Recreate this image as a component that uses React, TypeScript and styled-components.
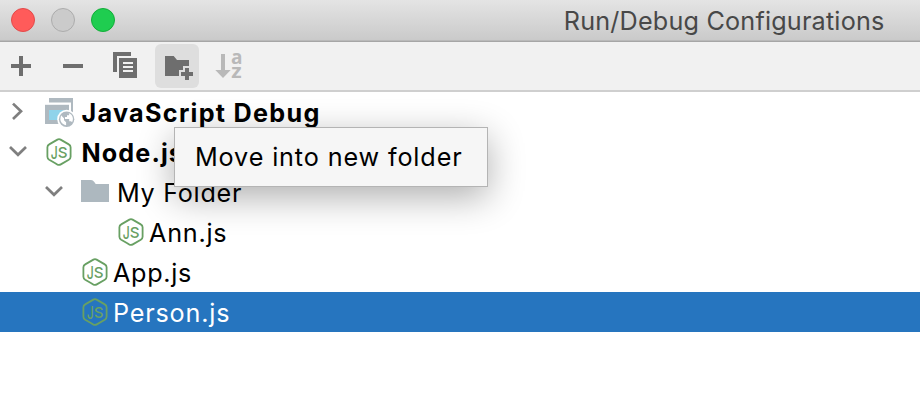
import React from "react";
import styled, { createGlobalStyle } from "styled-components";

const GlobalStyle = createGlobalStyle`
  * { box-sizing: border-box; }
  body { margin: 0; background: #fff; font-family: Inter, "Liberation Sans", sans-serif; overflow: hidden; }
`;

const Window = styled.div`
  position: relative;
  width: 920px;
  height: 400px;
  overflow: hidden;
  background: #fff;
  color: #000;
`;

const TitleBar = styled.header`
  display: flex;
  align-items: center;
  justify-content: space-between;
  height: 42px;
  padding: 0 35.5px 2px 11px;
  background: linear-gradient(#e4e4e4, #cacaca 40px);
  border-bottom: 1px solid #a6a6a6;
  box-shadow: inset 0 -1px #b9b9b9;
`;

const Lights = styled.div`
  display: flex;
  gap: 16px;
`;

const Light = styled.span<{ $fill: string; $ring: string }>`
  width: 24px;
  height: 24px;
  border-radius: 50%;
  background: ${(p) => p.$fill};
  border: 1px solid ${(p) => p.$ring};
`;

const Title = styled.h1`
  margin: 2px 0 0;
  font-size: 25.2px;
  font-weight: 400;
  line-height: 40px;
  letter-spacing: 0.19px;
  color: #484848;
  white-space: nowrap;
`;

const Toolbar = styled.div`
  display: flex;
  align-items: center;
  gap: 8px;
  height: 50px;
  background: #f1f1f1;
  border-bottom: 2px solid #cfcfcf;
`;

const ToolButton = styled.button<{ $active?: boolean }>`
  display: block;
  width: 44px;
  height: 44px;
  padding: 0;
  border: 0;
  border-radius: 6px;
  background: ${(p) => (p.$active ? "#dedede" : "transparent")};
  &:first-child { margin-left: -1px; }
  & svg { display: block; }
`;

const Tree = styled.div`
  display: flex;
  flex-direction: column;
`;

const Row = styled.div<{ $indent: number; $selected?: boolean }>`
  display: flex;
  align-items: center;
  height: 40px;
  padding-left: ${(p) => p.$indent}px;
  background: ${(p) => (p.$selected ? "#2675bf" : "transparent")};
  color: ${(p) => (p.$selected ? "#fff" : "#000")};
  & svg { display: block; flex: none; }
`;

const Label = styled.span<{ $bold?: boolean; $gap: number; $spacing: number }>`
  margin-left: ${(p) => p.$gap}px;
  padding-top: 2px;
  font-size: 25.2px;
  line-height: 40px;
  font-weight: ${(p) => (p.$bold ? 700 : 400)};
  letter-spacing: ${(p) => p.$spacing}px;
  white-space: nowrap;
`;

const Spacer = styled.span<{ $w: number }>`
  flex: none;
  width: ${(p) => p.$w}px;
`;

const Tooltip = styled.div`
  position: absolute;
  left: 174px;
  top: 127px;
  width: 314px;
  height: 60px;
  padding-left: 20px;
  font-size: 25.2px;
  line-height: 59px;
  letter-spacing: 0.87px;
  white-space: nowrap;
  background: #f6f6f6;
  border: 1px solid #b4b4b4;
  box-shadow: 0 10px 36px rgba(0, 0, 0, 0.32);
`;

const GREY = "#6e6e6e";

const Chevron = ({ open }: { open?: boolean }) => (
  <svg width="36" height="40" viewBox="0 0 36 40" fill="none" stroke="#7f7f7f" strokeWidth="2.7">
    <path d={open ? "M10 15L18 22.8L26 15" : "M13 11.6L21 19.3L13 27"} />
  </svg>
);

const NodeIcon = () => (
  <svg width="28" height="40" viewBox="0 0 28 40" fill="none" stroke="#68a063" strokeWidth="1.8">
    <path d="M10.3 31.2L4.2 27.7Q2.4 26.6 2.4 24.7V15.3Q2.4 13.4 4.2 12.4L12.4 7.6Q14 6.7 15.6 7.6L23.8 12.4Q25.6 13.4 25.6 15.3V24.7Q25.6 26.6 23.8 27.7L15.8 32.4Q14 33.5 12.2 32.4L10.3 31.2" />
    <g fill="#68a063" stroke="none" fontFamily="Inter, sans-serif" fontWeight="500">
      <text x="5.8" y="27.3" fontSize="17" textLength="7" lengthAdjust="spacingAndGlyphs">J</text>
      <text x="12.8" y="25.8" fontSize="15.2" textLength="9.8" lengthAdjust="spacingAndGlyphs">S</text>
    </g>
  </svg>
);

const WebIcon = () => (
  <svg width="32" height="40" viewBox="0 0 32 40">
    <path fill="#afb9c0" d="M5 6H29V24H27V10.5H5Z" />
    <path fill="#afb9c0" d="M1 12.8H25V32H1Z" />
    <path fill="#8fd3ea" d="M5 18H21V28H5Z" />
    <circle cx="22.6" cy="27.2" r="9.4" fill="#fff" />
    <circle cx="22.6" cy="27.2" r="7.7" fill="#afb9c0" />
    <path fill="#fff" d="M17 23.2L20 26.2L20 28.3L22.1 30.3V33.2L20.4 32.7Q16.6 30.8 16.3 27.2Z" />
    <path fill="#fff" d="M23.3 21.1L25.2 21.6L25.1 23.2H23V25H20.9L21 27H25.2V29.2H27L28.1 30.3Q30 26.5 27.6 23.1Q26 21 23.3 21.1Z" />
  </svg>
);

const FolderIcon = () => (
  <svg width="28" height="40" viewBox="0 0 28 40">
    <path fill="#adb8bf" d="M0 8H10Q12 8 13.3 10L14.7 12H28V30H0Z" />
  </svg>
);

const AddIcon = () => (
  <svg width="44" height="44" viewBox="0 0 44 44"><path fill={GREY} d="M20 12H24V20H32V24H24V32H20V24H12V20H20Z" /></svg>
);
const RemoveIcon = () => (
  <svg width="44" height="44" viewBox="0 0 44 44"><path fill={GREY} d="M12 20H32V24H12Z" /></svg>
);
const CopyIcon = () => (
  <svg width="44" height="44" viewBox="0 0 44 44">
    <path fill={GREY} d="M10 8H28V12H14V28H10Z" />
    <path fill={GREY} d="M16 14H34V34H16Z" />
    <path fill="#f1f1f1" d="M20 18H30V20H20ZM20 22H30V24H20ZM20 26H30V28H20Z" />
  </svg>
);
const NewFolderIcon = () => (
  <svg width="44" height="44" viewBox="0 0 44 44">
    <path fill={GREY} d="M10 12H18.7L22 16H34V22H28V26H24V32H10Z" />
    <path fill={GREY} d="M30 24H34V28H38V32H34V36H30V32H26V28H30Z" />
  </svg>
);
const SortIcon = () => (
  <svg width="44" height="44" viewBox="0 0 44 44" fill="#b9b9b9">
    <path d="M14 10H18V26H23.7L16 34L8.3 26H14Z" />
    <text x="24" y="20.2" fontFamily="Open Sans, sans-serif" fontWeight="700" fontSize="19.5" textLength="11.5" lengthAdjust="spacingAndGlyphs">a</text>
    <text x="24.2" y="34" fontFamily="Open Sans, sans-serif" fontWeight="700" fontSize="20" textLength="10.4" lengthAdjust="spacingAndGlyphs">z</text>
  </svg>
);

export default function App() {
  return (
    <>
      <GlobalStyle />
      <Window>
        <TitleBar>
          <Lights>
            <Light $fill="#ff5b5a" $ring="#e34a4a" />
            <Light $fill="#cbcbcb" $ring="#acacac" />
            <Light $fill="#1fcd50" $ring="#12ae38" />
          </Lights>
          <Title>Run/Debug Configurations</Title>
        </TitleBar>
        <Toolbar>
          <ToolButton aria-label="Add"><AddIcon /></ToolButton>
          <ToolButton aria-label="Remove"><RemoveIcon /></ToolButton>
          <ToolButton aria-label="Copy"><CopyIcon /></ToolButton>
          <ToolButton aria-label="Move into new folder" $active><NewFolderIcon /></ToolButton>
          <ToolButton aria-label="Sort"><SortIcon /></ToolButton>
        </Toolbar>
        <Tree>
          <Row $indent={0}>
            <Chevron /><Spacer $w={8} /><WebIcon />
            <Label $bold $gap={5.5} $spacing={1.28}>JavaScript Debug</Label>
          </Row>
          <Row $indent={0}>
            <Chevron open /><Spacer $w={9} /><NodeIcon />
            <Label $bold $gap={8.5} $spacing={1.1}>Node.js</Label>
          </Row>
          <Row $indent={36}>
            <Chevron open /><Spacer $w={9} /><FolderIcon />
            <Label $gap={8} $spacing={0.7}>My Folder</Label>
          </Row>
          <Row $indent={117}>
            <NodeIcon /><Label $gap={4} $spacing={0.75}>Ann.js</Label>
          </Row>
          <Row $indent={81}>
            <NodeIcon /><Label $gap={4} $spacing={0.7}>App.js</Label>
          </Row>
          <Row $indent={81} $selected>
            <NodeIcon /><Label $gap={4} $spacing={0.8}>Person.js</Label>
          </Row>
        </Tree>
        <Tooltip role="tooltip">Move into new folder</Tooltip>
      </Window>
    </>
  );
}
